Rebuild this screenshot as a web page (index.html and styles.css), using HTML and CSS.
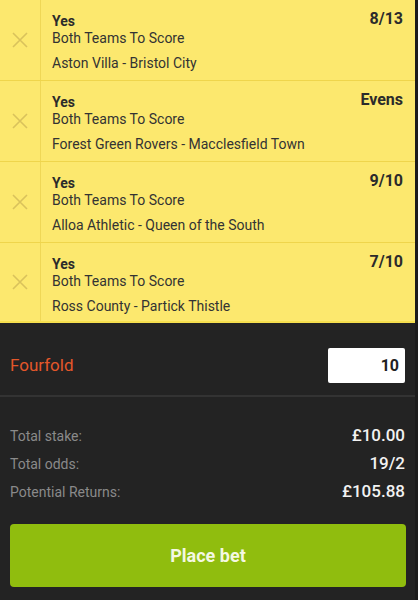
FILE: index.html
```html
<!DOCTYPE html>
<html lang="en">
<head>
  <meta charset="UTF-8">
  <title>Bet slip</title>
  <link rel="stylesheet" href="styles.css">
</head>
<body>
  <div class="slip">
    <ul class="selections">
      <li class="sel">
        <div class="remove"><svg width="16" height="16" viewBox="0 0 16 16"><path d="M1 1L15 15M15 1L1 15" stroke="#d9c25c" stroke-width="1.6"/></svg></div>
        <div class="info">
          <div class="pick">Yes</div>
          <div class="market">Both Teams To Score</div>
          <div class="event">Aston Villa - Bristol City</div>
        </div>
        <div class="odds">8/13</div>
      </li>
      <li class="sel">
        <div class="remove"><svg width="16" height="16" viewBox="0 0 16 16"><path d="M1 1L15 15M15 1L1 15" stroke="#d9c25c" stroke-width="1.6"/></svg></div>
        <div class="info">
          <div class="pick">Yes</div>
          <div class="market">Both Teams To Score</div>
          <div class="event">Forest Green Rovers - Macclesfield Town</div>
        </div>
        <div class="odds">Evens</div>
      </li>
      <li class="sel">
        <div class="remove"><svg width="16" height="16" viewBox="0 0 16 16"><path d="M1 1L15 15M15 1L1 15" stroke="#d9c25c" stroke-width="1.6"/></svg></div>
        <div class="info">
          <div class="pick">Yes</div>
          <div class="market">Both Teams To Score</div>
          <div class="event">Alloa Athletic - Queen of the South</div>
        </div>
        <div class="odds">9/10</div>
      </li>
      <li class="sel">
        <div class="remove"><svg width="16" height="16" viewBox="0 0 16 16"><path d="M1 1L15 15M15 1L1 15" stroke="#d9c25c" stroke-width="1.6"/></svg></div>
        <div class="info">
          <div class="pick">Yes</div>
          <div class="market">Both Teams To Score</div>
          <div class="event">Ross County - Partick Thistle</div>
        </div>
        <div class="odds">7/10</div>
      </li>
    </ul>

    <div class="multiple">
      <span class="bet-type">Fourfold</span>
      <input class="stake" type="text" value="10">
    </div>

    <div class="totals">
      <div class="total-row"><span class="label">Total stake:</span><span class="value">£10.00</span></div>
      <div class="total-row"><span class="label">Total odds:</span><span class="value">19/2</span></div>
      <div class="total-row"><span class="label">Potential Returns:</span><span class="value">£105.88</span></div>
    </div>

    <div class="actions">
      <button class="place-bet">Place bet</button>
    </div>
  </div>
</body>
</html>
```

FILE: styles.css
```css
body {
  margin: 0;
  background-color: #1c1c1c;
  font-family: Roboto, "Liberation Sans", Arial, sans-serif;
}
.slip {
  width: 415px;
  height: 600px;
  background-color: #232323;
}
.selections {
  list-style: none;
  margin: 0;
  padding: 0;
}
.sel {
  display: flex;
  height: 80px;
  background-color: #fce86e;
  border-bottom: 1px solid #efd54c;
  color: #333;
}
.sel:last-child {
  height: 78px;
  border-bottom: 2px solid #f6df4e;
}
.remove {
  width: 40px;
  flex-shrink: 0;
  border-right: 1px solid #efd756;
  display: flex;
  align-items: center;
  justify-content: center;
}
.info {
  flex: 1;
  padding: 13px 0 0 11px;
}
.pick {
  font-size: 14px;
  font-weight: bold;
  line-height: 16px;
  color: #2b2b2b;
}
.market {
  font-size: 14px;
  line-height: 18px;
}
.event {
  font-size: 14px;
  line-height: 18px;
  margin-top: 7px;
}
.odds {
  padding: 9px 12px 0 0;
  font-size: 16px;
  font-weight: bold;
  color: #2b2b2b;
}
.multiple {
  display: flex;
  align-items: center;
  justify-content: space-between;
  box-sizing: border-box;
  height: 74px;
  padding: 12px 10px 0;
  border-bottom: 2px solid #333;
}
.bet-type {
  color: #e4572a;
  font-size: 17px;
}
.stake {
  width: 77px;
  height: 35px;
  box-sizing: border-box;
  border: none;
  border-radius: 2px;
  padding: 0 6px;
  text-align: right;
  font-family: Roboto, "Liberation Sans", Arial, sans-serif;
  font-size: 16px;
  font-weight: bold;
  color: #222;
}
.totals {
  padding: 28px 10px 0;
}
.total-row {
  display: flex;
  justify-content: space-between;
  align-items: baseline;
  height: 28px;
}
.label {
  color: #8a8a8a;
  font-size: 14px;
}
.value {
  color: #f2f2f2;
  font-size: 17px;
  font-weight: 500;
}
.actions {
  padding: 15px 9px 0 10px;
}
.place-bet {
  width: 100%;
  height: 63px;
  border: none;
  border-radius: 4px;
  background-color: #90bd0e;
  color: #f4f8e2;
  font-family: Roboto, "Liberation Sans", Arial, sans-serif;
  font-size: 18px;
  font-weight: bold;
}
```
